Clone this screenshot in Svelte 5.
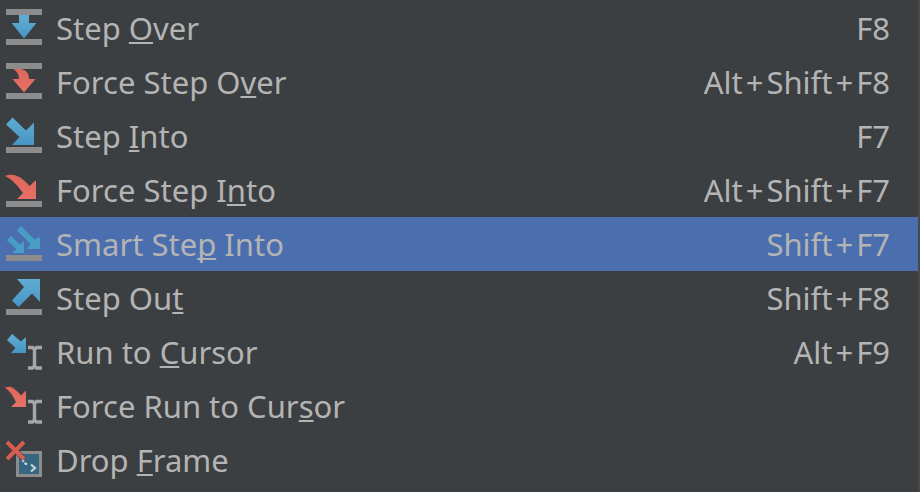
<script>
  const items = [
    { icon: 'over', before: 'Step ', key: 'O', after: 'ver', shortcut: ['F8'] },
    { icon: 'forceOver', before: 'Force Step O', key: 'v', after: 'er', shortcut: ['Alt', 'Shift', 'F8'] },
    { icon: 'into', before: 'Step ', key: 'I', after: 'nto', shortcut: ['F7'] },
    { icon: 'forceInto', before: 'Force Step I', key: 'n', after: 'to', shortcut: ['Alt', 'Shift', 'F7'] },
    { icon: 'smartInto', before: 'Smart Ste', key: 'p', after: ' Into', shortcut: ['Shift', 'F7'] },
    { icon: 'out', before: 'Step Ou', key: 't', after: '', shortcut: ['Shift', 'F8'] },
    { icon: 'cursor', before: 'Run to ', key: 'C', after: 'ursor', shortcut: ['Alt', 'F9'] },
    { icon: 'forceCursor', before: 'Force Run to Cur', key: 's', after: 'or', shortcut: [] },
    { icon: 'drop', before: 'Drop ', key: 'F', after: 'rame', shortcut: [] }
  ];
  let selected = $state(4);
</script>

{#snippet ground()}
  <rect x="6" y="38" width="36" height="6" fill="#8c8c8c" />
{/snippet}

{#snippet caret()}
  <path d="M28 22.500h4.500l2 2 2-2H42M28 43h4.500l2-2 2 2H42M34.500 24v18" fill="none" stroke="#a6a6a6" stroke-width="3.400" />
{/snippet}

<div class="menu" role="menu" aria-label="Stepping actions">
  {#each items as item, i}
    <button class="item" class:selected={i === selected} role="menuitem" onclick={() => (selected = i)}>
      <svg class="icon" viewBox="0 0 48 54" aria-hidden="true">
        <defs>
          <linearGradient id="blue{i}" x1="0" y1="0" x2="0" y2="1">
            <stop offset="0" stop-color="#5fadd3" />
            <stop offset="1" stop-color="#4795c5" />
          </linearGradient>
          <linearGradient id="red{i}" x1="0" y1="0" x2="0" y2="1">
            <stop offset="0" stop-color="#df6659" />
            <stop offset="1" stop-color="#e57166" />
          </linearGradient>
        </defs>
        {#if item.icon === 'over'}
          <rect x="6" y="8" width="36" height="6" fill="#8c8c8c" />
          <path d="M19 14h10v8h7.500L24 37.500 11.500 22H19z" fill="url(#blue{i})" />
          {@render ground()}
        {:else if item.icon === 'forceOver'}
          <rect x="6" y="8" width="36" height="6" fill="#8c8c8c" />
          <path d="M13 14h8c5 1 8 4 8 10h6.500L24 37.500 12.500 24H19c0-4-2-8-6-10z" fill="url(#red{i})" />
          {@render ground()}
        {:else if item.icon === 'into'}
          <path d="M12.500 8.500 26 21.500 34 13.500V36H12l7.500-8L6 15.500z" fill="url(#blue{i})" />
          {@render ground()}
        {:else if item.icon === 'forceInto'}
          <path d="M5 13c3-1.500 8-2 12 0 5 2 9 6 12.500 10L36 17v19H17l6-6C18 23 13 17 5 13z" fill="url(#red{i})" />
          {@render ground()}
        {:else if item.icon === 'smartInto'}
          <path d="M21 9l13.500 13.500L40 20v12H27l3.500-5L17 13.500zM11 19l9 8.500 4-3.500v12H12l4.500-4L7 23.500z" fill="#489dc5" />
          {@render ground()}
        {:else if item.icon === 'out'}
          <path d="M17 8h23v23l-8-8.500L18.500 36 12 29.500 24 16z" fill="url(#blue{i})" />
          {@render ground()}
        {:else if item.icon === 'cursor'}
          <path d="M12 9l9 7.500 5-4.500v16H11l4.500-5L7 15z" fill="url(#blue{i})" />
          {@render caret()}
        {:else if item.icon === 'forceCursor'}
          <path d="M5 8.500c3-1 6-1 8 .5 3 2 6 5 8 7.500l5-5V28H11l5-5C13 17 10 12 5 8.500z" fill="url(#red{i})" />
          {@render caret()}
        {:else}
          <rect x="17.500" y="19.500" width="23" height="23" fill="#356781" stroke="#8c8c8c" stroke-width="3" />
          <path d="M22 27l2 1.500M24.500 30l2.500 1.500M31 31.500l4 3.500-4 3.500" fill="none" stroke="#c5d3da" stroke-width="2.200" />
          <path d="M7 9l17 17M24 9L7 26" fill="none" stroke="#3c3f41" stroke-width="6" opacity=".6" />
          <path d="M7 9l17 17M24 9L7 26" fill="none" stroke="#d45d50" stroke-width="4" />
        {/if}
      </svg>
      <span class="label">{item.before}<u>{item.key}</u>{item.after}</span>
      <span class="shortcut">{#each item.shortcut as part, n}{#if n > 0}<span class="plus">+</span>{/if}{part}{/each}</span>
    </button>
  {/each}
</div>

<style>
  :global(body) {
    background: #3c3f41;
  }

  .menu {
    display: flex;
    flex-direction: column;
    box-sizing: border-box;
    min-height: 100vh;
    padding: 1px 0 5px;
    border-right: 2px solid #48494b;
    background: #3c3f41;
  }

  .item {
    display: flex;
    align-items: center;
    width: 100%;
    height: 54px;
    margin: 0;
    padding: 0 28px 0 0;
    border: 0;
    background: transparent;
    color: #b4b4b4;
    font: 31px/54px "Noto Sans", "Open Sans", sans-serif;
    text-align: left;
    white-space: nowrap;
  }

  .item.selected {
    background: #4b6eaf;
  }

  .item:focus-visible {
    outline: none;
  }

  .icon {
    flex: none;
    width: 48px;
    height: 54px;
    margin-right: 8px;
  }

  .label {
    flex: 1;
  }

  .plus {
    padding: 0 3px;
  }

  u {
    text-decoration: underline 2px;
    text-underline-offset: 2px;
    text-decoration-skip-ink: none;
  }
</style>
